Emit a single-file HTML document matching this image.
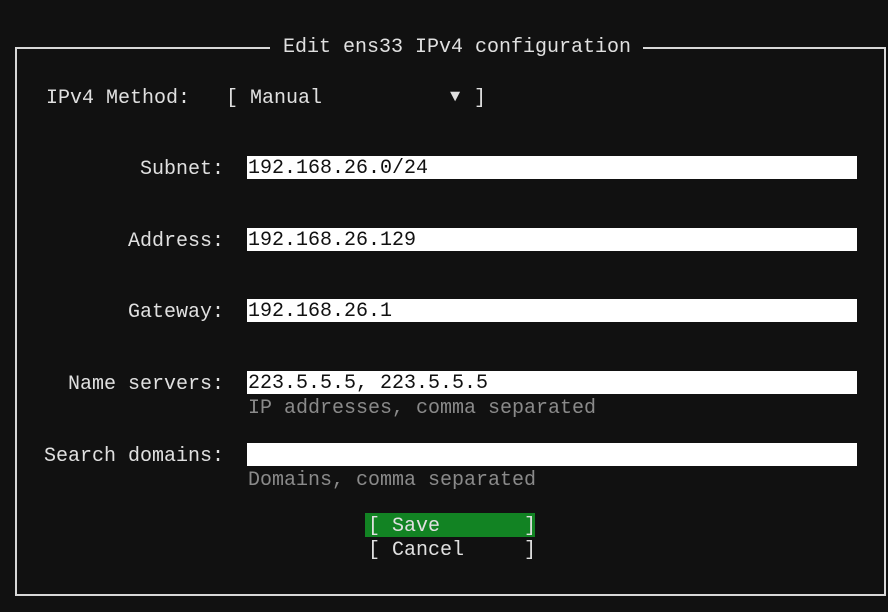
<!DOCTYPE html>
<html><head><style>
html,body{margin:0;padding:0;background:#111;}
body{width:888px;height:612px;position:relative;overflow:hidden;font-family:"Liberation Mono",monospace;font-size:20px;color:#e0e0e0;}
.t{position:absolute;line-height:24px;height:24px;white-space:pre;}
.box{position:absolute;left:15px;top:47px;width:871px;height:549px;border:2px solid #d8d8d8;box-sizing:border-box;}
.f{position:absolute;left:247px;width:610px;height:23px;background:#fff;color:#111;line-height:25px;padding-left:1px;box-sizing:border-box;white-space:pre;}
.h{color:#8a8a8a;}
</style></head><body>
<div class="box"></div>
<div class="t" style="left:270px;top:38px;background:#111;padding:0 12px 0 13px;height:20px;line-height:20px;">Edit ens33 IPv4 configuration</div>
<div class="t" style="left:46px;top:87px;">IPv4 Method:</div>
<div class="t" style="left:226px;top:87px;">[ Manual</div>
<div class="t" style="left:450px;top:86px;font-size:17px;">▼</div>
<div class="t" style="left:474px;top:87px;">]</div>
<div class="t" style="left:140px;top:158px;">Subnet:</div>
<div class="f" style="top:156px;">192.168.26.0/24</div>
<div class="t" style="left:128px;top:230px;">Address:</div>
<div class="f" style="top:228px;">192.168.26.129</div>
<div class="t" style="left:128px;top:301px;">Gateway:</div>
<div class="f" style="top:299px;">192.168.26.1</div>
<div class="t" style="left:68px;top:373px;">Name servers:</div>
<div class="f" style="top:371px;">223.5.5.5, 223.5.5.5</div>
<div class="t h" style="left:248px;top:397px;">IP addresses, comma separated</div>
<div class="t" style="left:44px;top:445px;">Search domains:</div>
<div class="f" style="top:443px;"></div>
<div class="t h" style="left:248px;top:469px;">Domains, comma separated</div>
<div style="position:absolute;left:365px;top:513px;width:170px;height:24px;background:#128323;"></div>
<div class="t" style="left:368px;top:515px;">[ Save       ]</div>
<div class="t" style="left:368px;top:539px;">[ Cancel     ]</div>
</body></html>
